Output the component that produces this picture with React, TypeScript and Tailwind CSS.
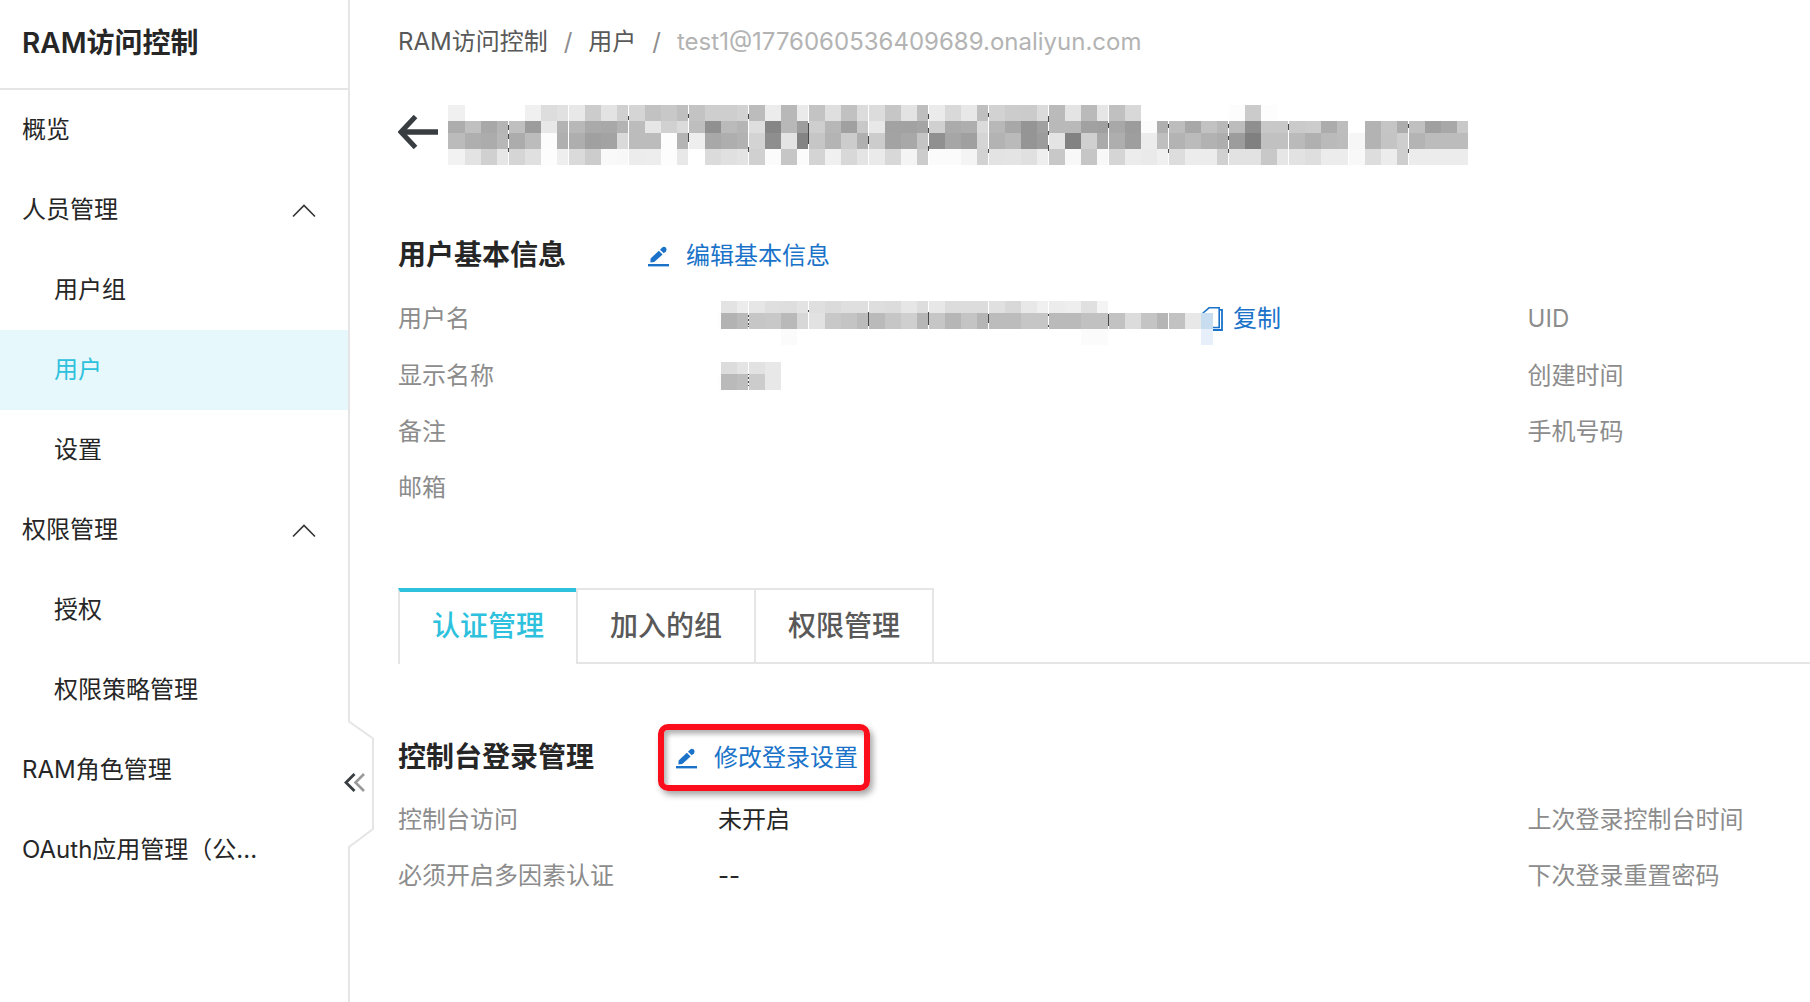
import type { ReactNode } from "react";

type MenuItem = {
  label: string;
  sub?: boolean;
  group?: boolean;
  active?: boolean;
};

const menu: MenuItem[] = [
  { label: "概览" },
  { label: "人员管理", group: true },
  { label: "用户组", sub: true },
  { label: "用户", sub: true, active: true },
  { label: "设置", sub: true },
  { label: "权限管理", group: true },
  { label: "授权", sub: true },
  { label: "权限策略管理", sub: true },
  { label: "RAM角色管理" },
  { label: "OAuth应用管理（公..." },
];

const tabs = ["认证管理", "加入的组", "权限管理"];

// Masked values: one grey level (hex) per cell, four cells in each 60px strip.
const titleRows = [
  "F0FFFFFF FFF0DDE1 E8CCE3D0 D5C2C8BF C3CECED2 BCECB8EA C3DFC1DC DCC6E3BE EBD9E8BF D2CCCBDB BAE4BAE6 C0D8FFFF FFFFFFFF FCCBFDFF FFFFFFFF FFFFFFFF FFFFFFFF",
  "ADC0A8B5 BF9CE8B3 B8AAA8B3 BCE6D1DB BE90BAB5 DE86B89D CEB7A0C8 E8A2A2A5 D0ABAEDB B8A895A0 B9B9A1A0 A89CFCAF BDA8C2B8 BC8FC8C8 CACCACBD FFB3C5AD C0A0A8C8",
  "BBAFACB7 ACBCFCAF AEA0A3DA BCBCFDB4 EEA8AEB2 D38EE484 C6B4CCB0 CCA3A8C4 90A6A0D5 B3BA959C E482D0AA AE9EECBF B3BBB2AE 9C80C1C1 BAB0BABC F6B3C4CE B4BCBCBC",
  "F2E3D0E6 D5E0FDEE DACCF9F8 ECEDFDE8 FFDBE0E3 D0FBC6FB D4F0D8E4 EAD8F4CC FBFBF4D2 E3E4E0EE C8F8C6F8 D5ECEAF0 DDECECD0 E2E2C8E6 E2DEECEC F8DDECCE ECECECEC",
];

const nameRows = [
  "FFFFE3EC E6DFDEE3 DFDBDFDF DEDCE6DD E7DCDCDC E0D8E8F0 ECEEE0F4 FFFFFFFF FFFF",
  "FFFDB3BA C6C8B9D7 E2C8C4BB BAC6CFB6 C6B6C4B5 BCBCC6C6 BABAC1C1 C2DCC4B5 C2E8",
  "FFFFFFFF FFFFFBFF FFFFFFFF FFFFFFFF FFFFFFFF FFFFFFFF FFFFFBFB FFFFFFFF FFFF",
];

const displayRows = ["FFFFDCE4 E2E8", "FFFDBABE CCE8"];

const cellX = [0, 17, 33, 49, 60];

type MosaicProps = {
  rows: string[];
  edges: number[];
  start?: number;
  width: number;
  marks: number[][];
};

function Mosaic({ rows, edges, start = 0, width, marks }: MosaicProps) {
  const height = edges[edges.length - 1];
  const strips = rows[0].split(" ");
  return (
    <svg
      width={width}
      height={height}
      viewBox={`${start} 0 ${width} ${height}`}
      className="shrink-0"
      shapeRendering="crispEdges"
      aria-hidden="true"
    >
      {rows.map((row, r) =>
        row.split(" ").map((strip, s) =>
          (strip.match(/../g) ?? []).map((level, c) =>
            level === "FF" ? null : (
              <rect
                key={`${r}-${s}-${c}`}
                x={s * 60 + cellX[c]}
                y={edges[r]}
                width={cellX[c + 1] - cellX[c]}
                height={edges[r + 1] - edges[r]}
                fill={`#${level}${level}${level}`}
              />
            ),
          ),
        ),
      )}
      {strips.slice(1).map((_, s) => (
        <rect key={s} x={(s + 1) * 60} y={0} width={1} height={height} fill="#fff" />
      ))}
      {marks.map(([x, y, h]) => (
        <rect key={`${x}-${y}`} x={x} y={y} width={1} height={h} fill="#4a4a4a" />
      ))}
    </svg>
  );
}

const titleMarks = [
  [60, 20, 5], [60, 29, 5], [60, 43, 4],
  [180, 11, 4],
  [240, 9, 4], [240, 28, 9],
  [300, 9, 5], [300, 42, 5],
  [360, 18, 21],
  [420, 31, 8],
  [480, 9, 5], [480, 23, 5], [480, 41, 5],
  [540, 8, 4], [540, 44, 4],
  [600, 11, 6], [600, 26, 4], [600, 40, 6],
  [660, 18, 5],
  [720, 19, 4], [720, 44, 4],
  [780, 19, 4], [780, 31, 4], [780, 44, 4],
  [840, 19, 6],
  [960, 19, 4], [960, 44, 4],
];

const nameMarks = [
  [60, 14, 2], [60, 18, 2], [60, 22, 2], [60, 25, 1],
  [120, 9, 2],
  [180, 11, 14],
  [240, 11, 13],
  [300, 13, 9],
  [360, 13, 2], [360, 24, 2],
  [420, 13, 12],
];

const displayMarks = [
  [60, 12, 1], [60, 15, 2], [60, 19, 2], [60, 23, 1],
];

function PencilIcon() {
  return (
    <svg width="22" height="24" viewBox="0 -2 22 24" fill="currentColor" aria-hidden="true">
      <path d="M2.6 12.6 10.8 4.7 14.6 8.4 6.2 16.1 2.4 16.6Z" />
      <path d="M12 3.7 14.2 1.4Q16 .1 17.8 1.6 19.4 3.4 18 5.2L15.8 7.3Z" />
      <rect x="0" y="18" width="21" height="2.4" />
    </svg>
  );
}

function ChevronUp() {
  return (
    <svg width="24" height="16" viewBox="0 -2 24 16" fill="none" aria-hidden="true">
      <path d="M1 12.5 12 1.5 23 12.5" stroke="#333" strokeWidth="1.6" />
    </svg>
  );
}

function CopyIcon() {
  return (
    <svg width="22" height="52" viewBox="0 -8 22 52" fill="none" aria-hidden="true">
      <g stroke="#1a73c9">
        <path d="M2 13V12L8 6.8H18.2V26.5H2V13" strokeWidth="1.6" />
        <path d="M18 8.8H21V29H10" strokeWidth="1.8" />
      </g>
      <path d="M0 12H12V28H0Z" fill="#c9ddf0" />
      <path d="M0 28H12V44H0Z" fill="#e6effa" />
    </svg>
  );
}

function Sidebar() {
  return (
    <aside className="relative w-[350px] shrink-0 border-r-2 border-[#e5e5e5]">
      <div className="flex h-[90px] items-center border-b-2 border-[#e5e5e5] px-[22px]">
        <h1 className="text-[28px] font-semibold">RAM访问控制</h1>
      </div>
      <nav>
        <ul>
          {menu.map((item) => (
            <li key={item.label}>
              {item.group ? (
                <button
                  type="button"
                  className="flex h-20 w-full items-center justify-between pr-8 pl-[22px] text-left"
                >
                  {item.label}
                  <ChevronUp />
                </button>
              ) : (
                <a
                  href="#"
                  className={`flex h-20 items-center whitespace-nowrap ${
                    item.sub ? "pl-[54px]" : "pl-[22px]"
                  } ${item.active ? "bg-[#e6f8fc] text-[#2dc1dd]" : ""}`}
                >
                  {item.label}
                </a>
              )}
            </li>
          ))}
        </ul>
      </nav>
      {/* Collapse handle sits over the border */}
      <button
        type="button"
        aria-label="collapse"
        className="absolute top-[720px] -right-7 h-32 w-8"
      >
        <svg width="32" height="128" viewBox="0 0 32 128" fill="none">
          <path d="M0 0H8V128H0Z" fill="#fff" />
          <path d="M5 0V1.5L29 18.5V109L5 127V128" stroke="#e5e5e5" strokeWidth="2" />
          <path d="M10.500 54 2 62.500 10.500 71" stroke="#373d41" strokeWidth="2.800" />
          <path d="M20 54 11.500 62.500 20 71" stroke="#999" strokeWidth="2.600" />
        </svg>
      </button>
    </aside>
  );
}

function SectionHeader({ title, children }: { title: string; children: ReactNode }) {
  return (
    <div className="flex h-11 items-center gap-[82px]">
      <h2 className="text-[28px] leading-10 font-semibold">{title}</h2>
      {children}
    </div>
  );
}

function EditButton({ label }: { label: string }) {
  return (
    <button type="button" className="flex items-center gap-4 pt-0.5 text-[#1a73c9]">
      <PencilIcon />
      {label}
    </button>
  );
}

type FieldProps = { label: string; tall?: boolean; children?: ReactNode };

function Field({ label, tall, children }: FieldProps) {
  return (
    <div className={`flex items-center ${tall ? "min-h-[58px]" : "min-h-14"}`}>
      <dt className="w-80 shrink-0 text-[#8c8c8c]">{label}</dt>
      <dd className="flex items-center">{children}</dd>
    </div>
  );
}

function FieldGrid({ children }: { children: ReactNode }) {
  return (
    <div className="mt-[13px] grid grid-cols-[minmax(0,4fr)_minmax(0,1fr)]">{children}</div>
  );
}

export default function App() {
  return (
    <div className="flex min-h-screen overflow-hidden bg-white font-['Inter','Noto_Sans_CJK_SC',sans-serif] text-2xl text-[#262626]">
      <Sidebar />
      <main className="min-w-0 flex-1 pl-12">
        <nav className="flex h-[84px] items-center gap-4 text-[#595959]">
          <a href="#">RAM访问控制</a>
          <span className="text-[#8c8c8c]">/</span>
          <a href="#">用户</a>
          <span className="text-[#8c8c8c]">/</span>
          <span className="text-[#b3b3b3]">test1@1776060536409689.onaliyun.com</span>
        </nav>

        <div className="mt-[21px] flex items-center gap-2.5">
          <button type="button" aria-label="back" className="pb-1.5">
            <svg width="40" height="34" viewBox="0 0 40 34" fill="none" stroke="#373d41">
              <path d="M17.500 1.500 3 17 17.500 32.500" strokeWidth="5" />
              <path d="M3 17H40" strokeWidth="5.500" />
            </svg>
          </button>
          <Mosaic rows={titleRows} edges={[0, 16, 28, 44, 60]} width={1020} marks={titleMarks} />
        </div>

        <section className="mt-[68px]">
          <SectionHeader title="用户基本信息">
            <EditButton label="编辑基本信息" />
          </SectionHeader>
          <FieldGrid>
            <dl>
              <Field label="用户名" tall>
                <div className="pt-2">
                  <Mosaic
                    rows={nameRows}
                    edges={[0, 12, 28, 44]}
                    start={30}
                    width={483}
                    marks={nameMarks}
                  />
                </div>
                <button type="button" className="flex items-center gap-2.5 text-[#1a73c9]">
                  <CopyIcon />
                  复制
                </button>
              </Field>
              <Field label="显示名称">
                <Mosaic rows={displayRows} edges={[0, 12, 28]} start={30} width={64} marks={displayMarks} />
              </Field>
              <Field label="备注" />
              <Field label="邮箱" />
            </dl>
            <dl>
              <Field label="UID" tall />
              <Field label="创建时间" />
              <Field label="手机号码" />
            </dl>
          </FieldGrid>
        </section>

        <div role="tablist" className="mt-[72px] flex h-[76px] text-[28px] font-medium">
          {tabs.map((tab, i) => (
            <button
              key={tab}
              type="button"
              role="tab"
              aria-selected={i === 0}
              className={
                i === 0
                  ? "border-t-4 border-l-2 border-t-[#2dc1dd] border-l-[#e5e5e5] px-8 pb-0.5 text-[#2dc1dd]"
                  : "border-y-2 border-l-2 border-[#e5e5e5] px-8 pt-0.5 text-[#595959]"
              }
            >
              {tab}
            </button>
          ))}
          <div className="flex flex-1">
            <div className="w-0.5 bg-[#e5e5e5]" />
            <div className="flex-1 border-b-2 border-[#e5e5e5]" />
          </div>
        </div>

        <section className="mt-[71px] pb-20">
          <SectionHeader title="控制台登录管理">
            <div className="relative">
              <EditButton label="修改登录设置" />
              <div className="pointer-events-none absolute -top-4 -right-3 -bottom-[17px] -left-[18px] rounded-[10px] border-[6px] border-[#fb0d1b] shadow-[3px_4px_6px_rgba(0,0,0,0.35),inset_3px_4px_5px_rgba(0,0,0,0.3)]" />
            </div>
          </SectionHeader>
          <FieldGrid>
            <dl>
              <Field label="控制台访问">未开启</Field>
              <Field label="必须开启多因素认证">--</Field>
            </dl>
            <dl>
              <Field label="上次登录控制台时间" />
              <Field label="下次登录重置密码" />
            </dl>
          </FieldGrid>
        </section>
      </main>
    </div>
  );
}
